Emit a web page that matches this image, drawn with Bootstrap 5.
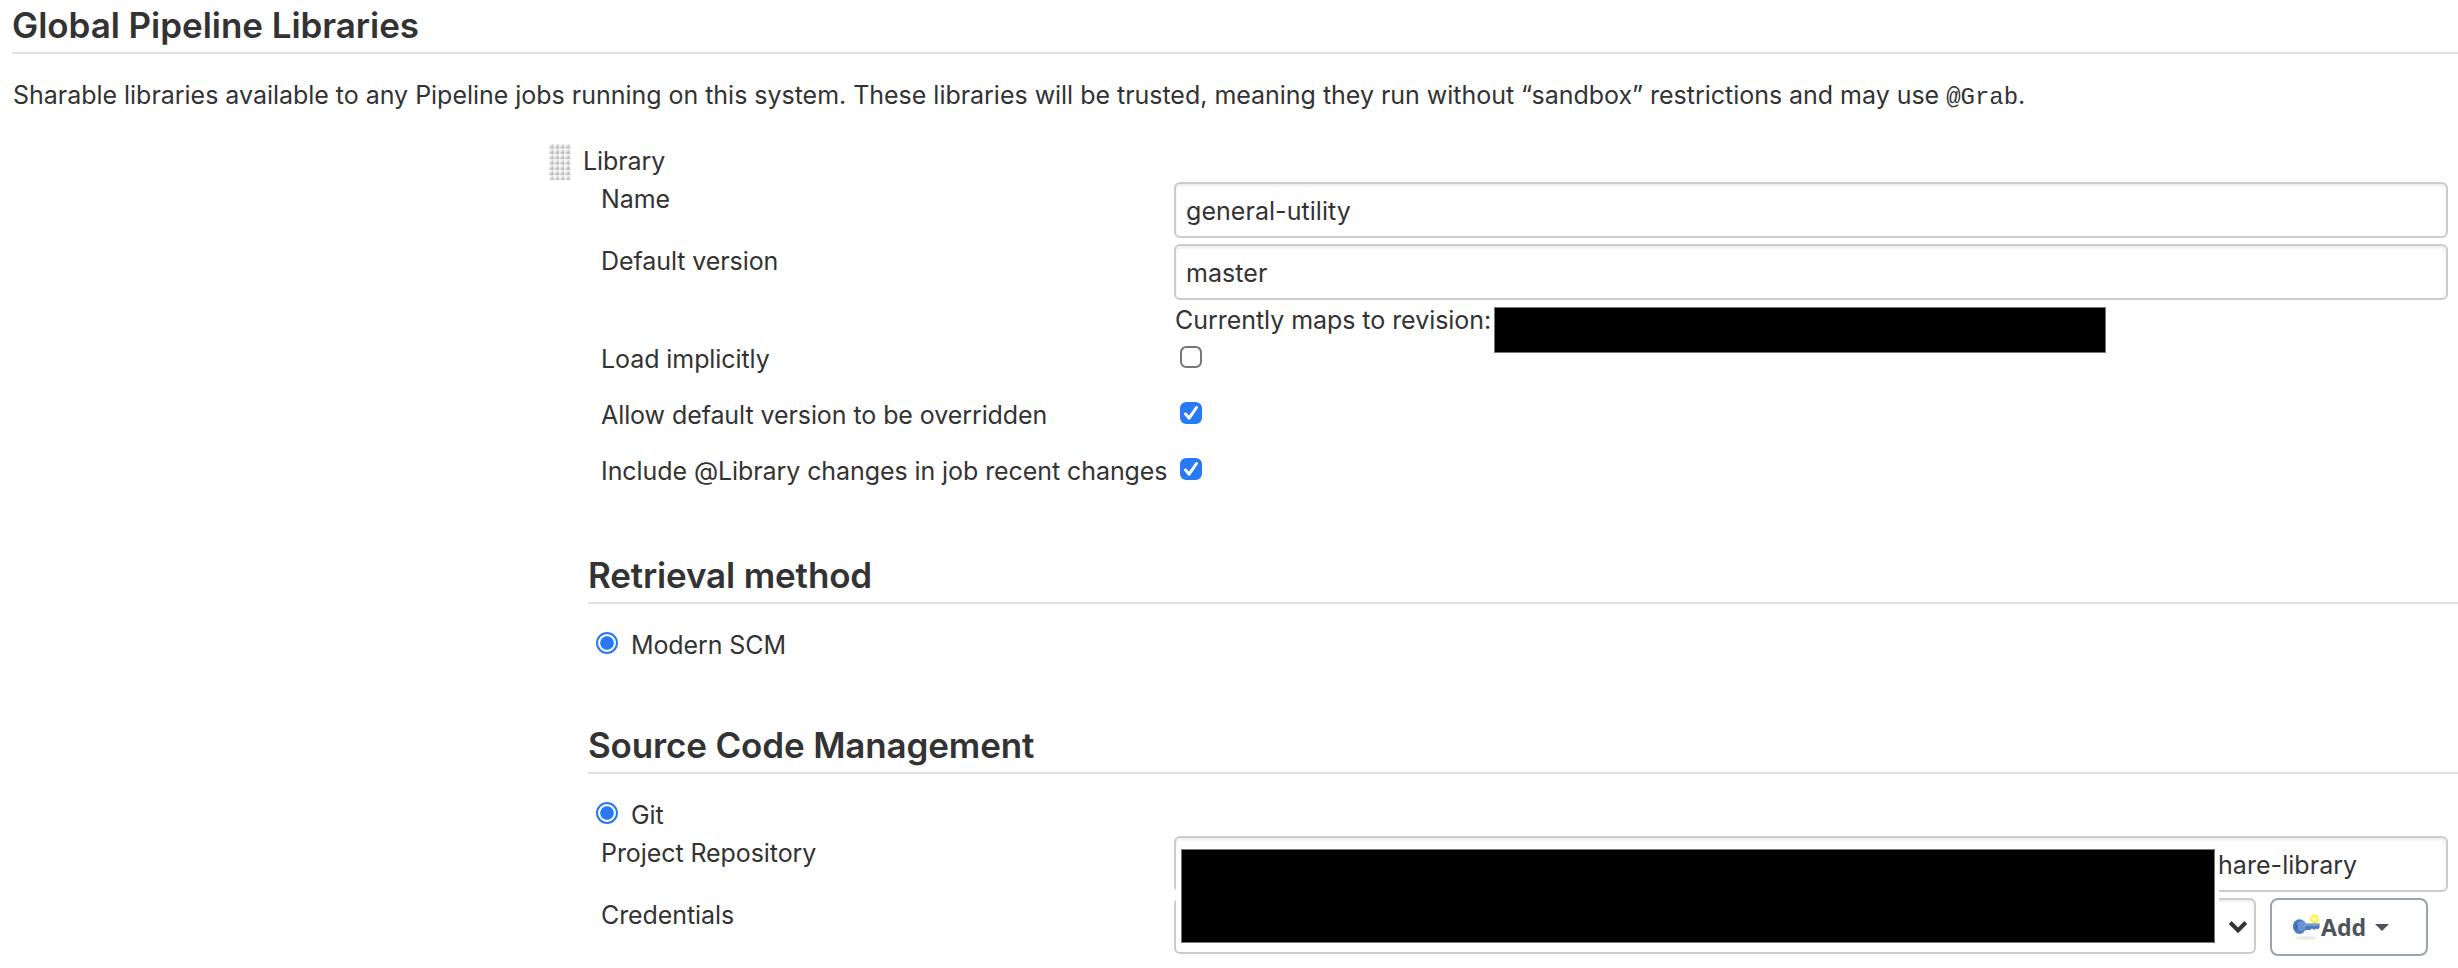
<!DOCTYPE html>
<html lang="en">
<head>
<meta charset="utf-8">
<title>Global Pipeline Libraries</title>
<link href="https://cdn.jsdelivr.net/npm/bootstrap@5.3.0/dist/css/bootstrap.min.css" rel="stylesheet">
<style>
body{font-family:Inter,"Liberation Sans",sans-serif;font-size:25px;line-height:32px;color:#333;background:#fff;overflow:hidden;height:968px}
.section-title{font-size:35px;line-height:44px;font-weight:600;border-bottom:2px solid #e0e0e0;margin:0;white-space:nowrap}
.page-title{height:54px;padding-top:3px;margin-left:12px;letter-spacing:-.05px}
.sub-title{height:52px;padding-top:1px;letter-spacing:-.15px}
.intro{padding:25px 0 0 13px;height:90px;white-space:nowrap;letter-spacing:-.025px}
.intro code{font-family:"Liberation Mono",monospace;font-size:24px;color:inherit}
.handle{width:22px;height:36px}
.library-head{height:38px;margin-left:549px;gap:12px;letter-spacing:-.08px}
.library-head span{padding-top:1px}
.settings{margin-left:588px}
.setting{height:62px;padding-left:13px;white-space:nowrap}
.setting-check{height:56px}
.setting-label{width:573px;flex:none;padding-top:1px;letter-spacing:-.08px}
.setting-check .setting-label{padding-top:0;margin-top:-1px}
.form-control,.form-select{height:56px;border:2px solid #ccc;border-radius:6px;padding:2px 10px 0;font-size:25px;line-height:32px;color:#333;box-shadow:inset 0 2px 3px rgba(0,0,0,.08)}
.form-control{width:1274px;letter-spacing:.05px}
.form-select{width:1082px;background-image:none}
.repository{padding-left:1042px}
.form-check-input{width:22px;height:22px;margin:0;border:2px solid #767676;border-radius:4px;flex:none}
.form-check-input:checked{background-color:#2779f6;border-color:#2779f6}
.form-check-input[type=checkbox]:checked{background-size:26px;background-image:url("data:image/svg+xml,%3csvg xmlns='http://www.w3.org/2000/svg' viewBox='0 0 26 26'%3e%3cpath fill='none' stroke='white' stroke-width='3' stroke-linecap='round' stroke-linejoin='round' d='M7.5 14l3.7 4.2L18.5 7.5'/%3e%3c/svg%3e")}
.form-check-input[type=radio]:checked{border-radius:50%;background:#fff radial-gradient(circle,#2779f6 6.3px,#fff 7.2px)}
.tick{margin:2px 0 0 6px}
.revision{height:38px;padding-left:587px}
.redacted{background:#000;border:1px solid #777}
.redacted-rev{width:612px;height:46px;margin:1px 0 0 4px;flex:none;position:relative}
.rev-text{width:315px;flex:none;white-space:nowrap;margin-top:-2px;letter-spacing:-.05px}
.choice{height:32px;gap:13px;padding-left:8px;margin-top:25px;letter-spacing:-.1px}
.choice .form-check-input{margin-top:3px}
.redacted-url{left:588px;top:10px;width:1043px;height:101px;background:#fff;padding:3px 0 0 5px}
.redacted-url div{width:1034px;height:94px}
.chevron{left:1640px;top:84px;width:20px;height:14px}
.add-btn{width:158px;height:58px;margin-left:14px;border:2px solid #98a5b0;border-radius:8px;color:#4d545d;font:700 23px/32px "Noto Sans",sans-serif;padding:11px 0 0 20px;background:#fff}
.key-icon{margin-top:2px}
.caret{margin:13px 0 0 9px}
</style>
</head>
<body>
<h1 class="section-title page-title">Global Pipeline Libraries</h1>
<p class="intro m-0">Sharable libraries available to any Pipeline jobs running on this system. These libraries will be trusted, meaning they run without “sandbox” restrictions and may use <code>@Grab</code>.</p>
<div class="library-head d-flex">
  <svg class="handle flex-shrink-0" viewBox="0 0 22 36"><defs><linearGradient id="dotShade" x1="0" y1="0" x2="1" y2="1"><stop offset=".15" stop-color="#fff"/><stop offset="1" stop-color="#999"/></linearGradient><pattern id="dots" width="5.33" height="5.33" patternUnits="userSpaceOnUse"><rect width="4.6" height="4.6" fill="url(#dotShade)"/></pattern></defs><rect width="22" height="36" fill="url(#dots)"/></svg>
  <span>Library</span>
</div>
<main class="settings">
  <div class="setting d-flex"><label class="setting-label">Name</label><input class="form-control" value="general-utility"></div>
  <div class="setting d-flex"><label class="setting-label">Default version</label><input class="form-control" value="master"></div>
  <div class="revision d-flex"><span class="rev-text">Currently maps to revision:</span><div class="redacted redacted-rev"></div></div>
  <div class="setting setting-check d-flex"><label class="setting-label">Load implicitly</label><input class="form-check-input tick" type="checkbox"></div>
  <div class="setting setting-check d-flex"><label class="setting-label">Allow default version to be overridden</label><input class="form-check-input tick" type="checkbox" checked></div>
  <div class="setting setting-check d-flex"><label class="setting-label">Include @Library changes in job recent changes</label><input class="form-check-input tick" type="checkbox" checked></div>

  <h2 class="section-title sub-title" style="margin-top:40px">Retrieval method</h2>
  <div class="choice d-flex"><input class="form-check-input" type="radio" name="retrieval" checked><span>Modern SCM</span></div>

  <h2 class="section-title sub-title" style="margin-top:61px">Source Code Management</h2>
  <div class="choice d-flex"><input class="form-check-input" type="radio" name="scm" checked><span>Git</span></div>

  <div class="position-relative" style="margin-top:5px">
    <div class="setting d-flex"><label class="setting-label">Project Repository</label><input class="form-control repository" value="hare-library"></div>
    <div class="setting d-flex"><label class="setting-label">Credentials</label><select class="form-select" aria-label="Credentials"></select>
      <button class="add-btn d-flex align-items-start" type="button">
        <svg width="29" height="30" viewBox="0 0 29 30" class="key-icon flex-shrink-0"><defs><filter id="soft"><feGaussianBlur stdDeviation=".8"/></filter></defs><ellipse cx="14" cy="25" rx="11" ry="1.5" fill="#ddd" filter="url(#soft)"/><circle cx="22.5" cy="6" r="3.4" fill="#fffcc0" stroke="#fff04a" stroke-width="2.2"/><path d="M12 10.5h15.5v4l-1.5 2-2-1-2 1.5-2-1.5-2 1.5h-6z" fill="#4d7cbd"/><ellipse cx="7.5" cy="13.6" rx="6.6" ry="7.4" fill="#4a7dc0"/><ellipse cx="9.5" cy="13" rx="4.2" ry="5" fill="#6a94cf"/><path d="M12 12h14" stroke="#84a7d8" stroke-width="1.5"/><ellipse cx="4.2" cy="14" rx="1.6" ry="2.4" fill="#3769ac"/></svg>
        <span>Add</span>
        <svg class="caret" width="14" height="7" viewBox="0 0 14 7"><path d="M0 0h14L7 7z" fill="#4d545d"/></svg>
      </button>
    </div>
    <div class="redacted-url position-absolute"><div class="redacted"></div></div>
    <svg class="chevron position-absolute" viewBox="0 0 20 14"><path d="M2.2 2.5L10 10.5l7.8-8" fill="none" stroke="#333" stroke-width="4"/></svg>
  </div>
</main>
<script src="https://cdn.jsdelivr.net/npm/bootstrap@5.3.0/dist/js/bootstrap.bundle.min.js"></script>
</body>
</html>
